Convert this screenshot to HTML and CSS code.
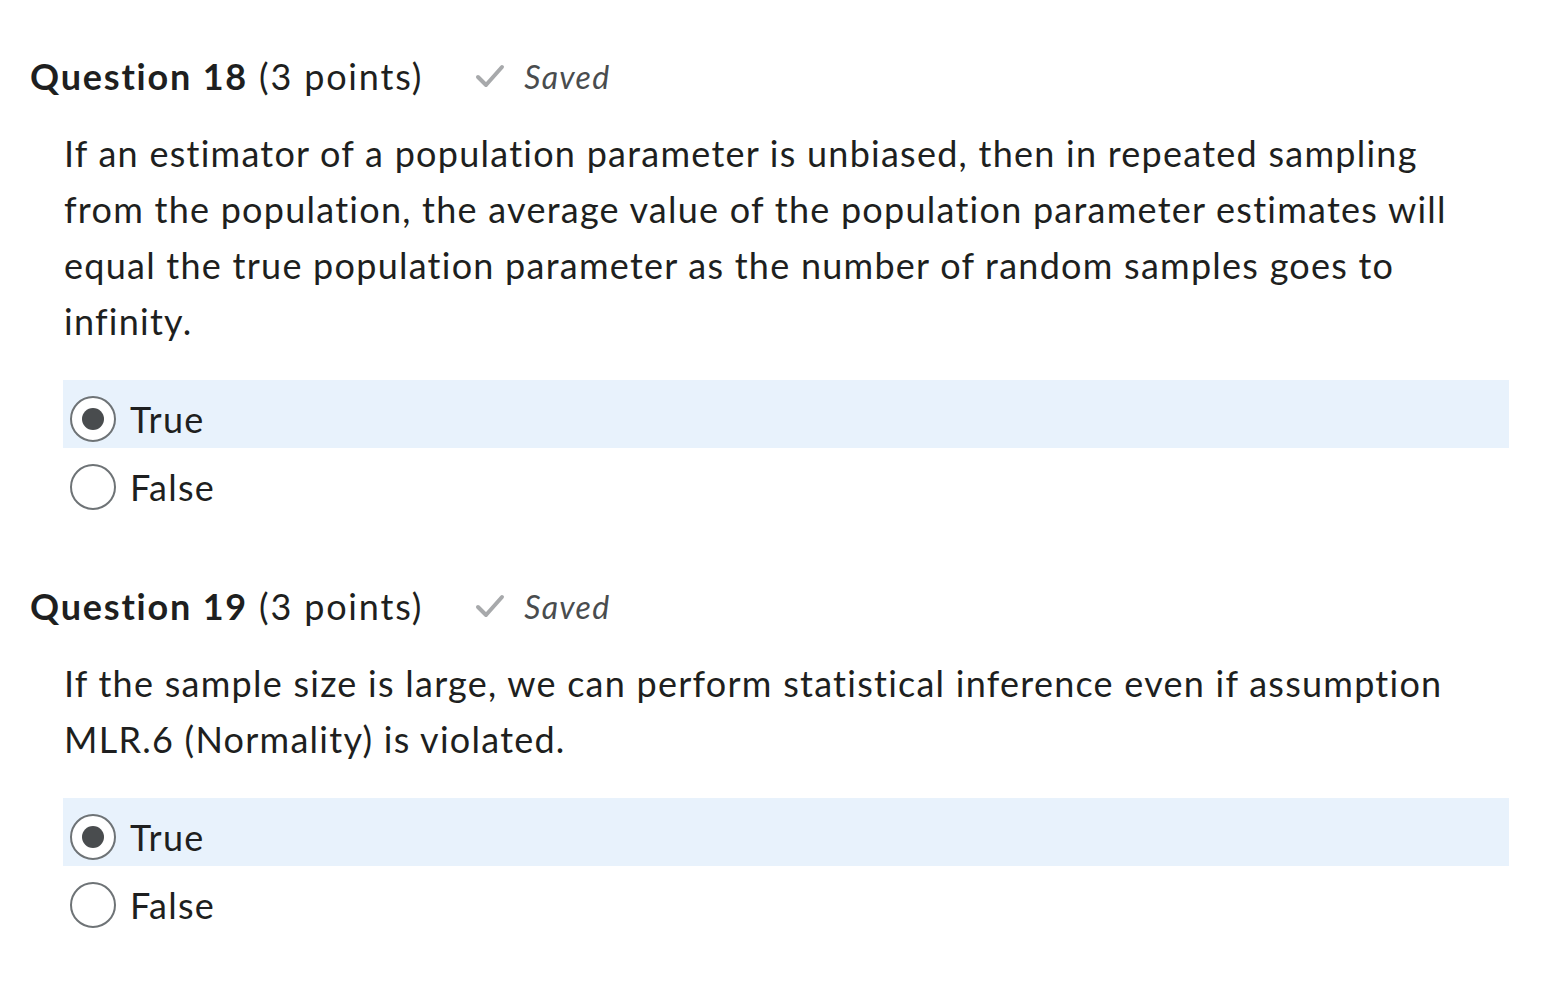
FILE: index.html
```html
<!DOCTYPE html>
<html>
<head>
<meta charset="utf-8">
<link rel="stylesheet" href="styles.css">
</head>
<body>
<div class="page">
  <section class="question">
    <div class="q-head">
      <h2 class="q-title"><strong>Question 18</strong> (3 points)</h2>
      <span class="saved">
        <svg class="check" viewBox="0 0 30 24" width="30" height="24"><path d="M3 13 L11 21 L27 3" fill="none" stroke="#a7a9ab" stroke-width="4" stroke-linecap="round" stroke-linejoin="round"/></svg>
        <em>Saved</em>
      </span>
    </div>
    <p class="q-text">If an estimator of a population parameter is unbiased, then in repeated sampling from the population, the average value of the population parameter estimates will equal the true population parameter as the number of random samples goes to infinity.</p>
    <div class="options">
      <label class="option selected"><span class="radio checked"></span><span class="opt-label">True</span></label>
      <label class="option"><span class="radio"></span><span class="opt-label">False</span></label>
    </div>
  </section>
  <section class="question">
    <div class="q-head">
      <h2 class="q-title"><strong>Question 19</strong> (3 points)</h2>
      <span class="saved">
        <svg class="check" viewBox="0 0 30 24" width="30" height="24"><path d="M3 13 L11 21 L27 3" fill="none" stroke="#a7a9ab" stroke-width="4" stroke-linecap="round" stroke-linejoin="round"/></svg>
        <em>Saved</em>
      </span>
    </div>
    <p class="q-text">If the sample size is large, we can perform statistical inference even if assumption MLR.6 (Normality) is violated.</p>
    <div class="options">
      <label class="option selected"><span class="radio checked"></span><span class="opt-label">True</span></label>
      <label class="option"><span class="radio"></span><span class="opt-label">False</span></label>
    </div>
  </section>
</div>
</body>
</html>
```

FILE: styles.css
```css
html, body {
  margin: 0;
  padding: 0;
  background: #ffffff;
}
body {
  font-family: Lato, "Open Sans", sans-serif;
  color: #1e1f20;
  font-variant-ligatures: none;
  font-feature-settings: "liga" 0, "clig" 0;
}
.page {
  padding: 54px 0 0 30px;
  width: 1479px;
}
.question {
  margin-bottom: 68px;
}
.q-head {
  display: flex;
  align-items: center;
  height: 44px;
}
.q-title {
  margin: 0;
  font-size: 36px;
  font-weight: 400;
  line-height: 44px;
  letter-spacing: 1.8px;
  white-space: nowrap;
}
.q-title strong {
  font-weight: 700;
}
.saved {
  display: flex;
  align-items: center;
  margin-left: 52px;
  color: #494c4e;
  font-size: 32px;
  letter-spacing: 1.3px;
}
.saved em {
  font-style: italic;
  margin-left: 19px;
}
.check {
  display: block;
}
.q-text {
  margin: 27px 0 0 34px;
  font-size: 36px;
  line-height: 56px;
  letter-spacing: 1.25px;
  width: 1425px;
}
.options {
  margin: 31px 0 0 33px;
  width: 1446px;
}
.option {
  box-sizing: border-box;
  display: flex;
  align-items: center;
  height: 68px;
  padding: 9px 0 0 7px;
  font-size: 36px;
  letter-spacing: 1.25px;
}
.option.selected {
  background: #e8f2fc;
}
.radio {
  box-sizing: border-box;
  width: 46px;
  height: 46px;
  border: 2px solid #6e7376;
  border-radius: 50%;
  background: #fff;
  display: flex;
  align-items: center;
  justify-content: center;
  flex: none;
}
.radio.checked::after {
  content: "";
  width: 22px;
  height: 22px;
  border-radius: 50%;
  background: #494c4e;
}
.opt-label {
  margin-left: 14px;
}
```
